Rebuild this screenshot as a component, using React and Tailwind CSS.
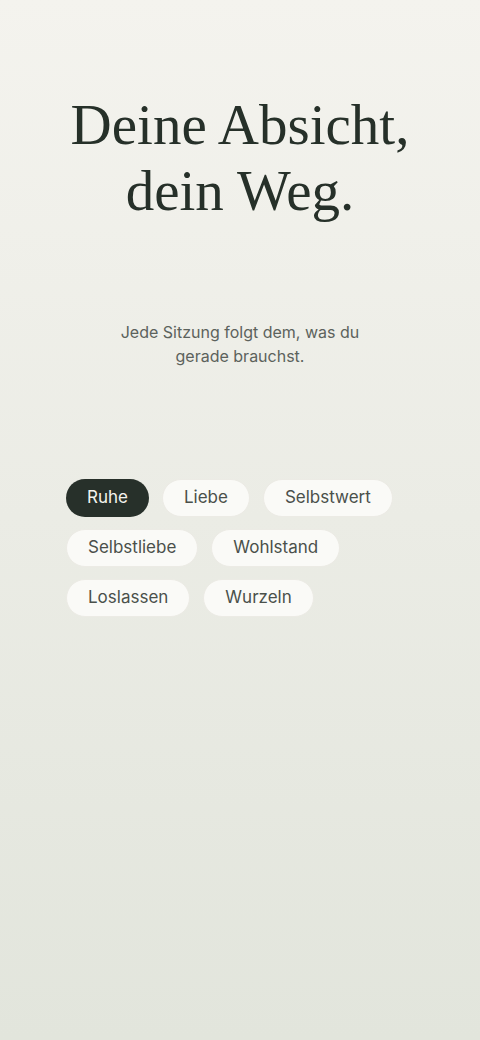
import React, { useState } from "react";

const topics = ["Ruhe", "Liebe", "Selbstwert", "Selbstliebe", "Wohlstand", "Loslassen", "Wurzeln"];

export default function App() {
  const [active, setActive] = useState("Ruhe");

  return (
    <div className="min-h-[1040px] w-full bg-gradient-to-b from-[#f4f3ee] to-[#e2e5dc] font-['Inter',sans-serif]">
      <div className="flex flex-col items-center pt-[92px]">
        <h1 className="text-center font-['Liberation_Serif',serif] text-[57px] leading-[66px] text-[#263029]">
          Deine Absicht,
          <br />
          dein Weg.
        </h1>

        <p className="mt-[96px] max-w-[250px] text-center text-[16px] leading-6 text-[#5c625c]">
          Jede Sitzung folgt dem, was du gerade brauchst.
        </p>

        {/* topic chips */}
        <div className="mt-[111px] flex w-full flex-wrap gap-x-[13px] gap-y-[12px] px-[66px]">
          {topics.map((t) => (
            <button
              key={t}
              onClick={() => setActive(t)}
              className={
                active === t
                  ? "h-[38px] rounded-full bg-[#27302a] px-[21px] text-[17px] text-[#f4f3ee]"
                  : "h-[38px] rounded-full border border-[#ecebe5] bg-[#fafaf7] px-[21px] text-[17px] text-[#4a504b]"
              }
            >
              {t}
            </button>
          ))}
        </div>
      </div>
    </div>
  );
}
